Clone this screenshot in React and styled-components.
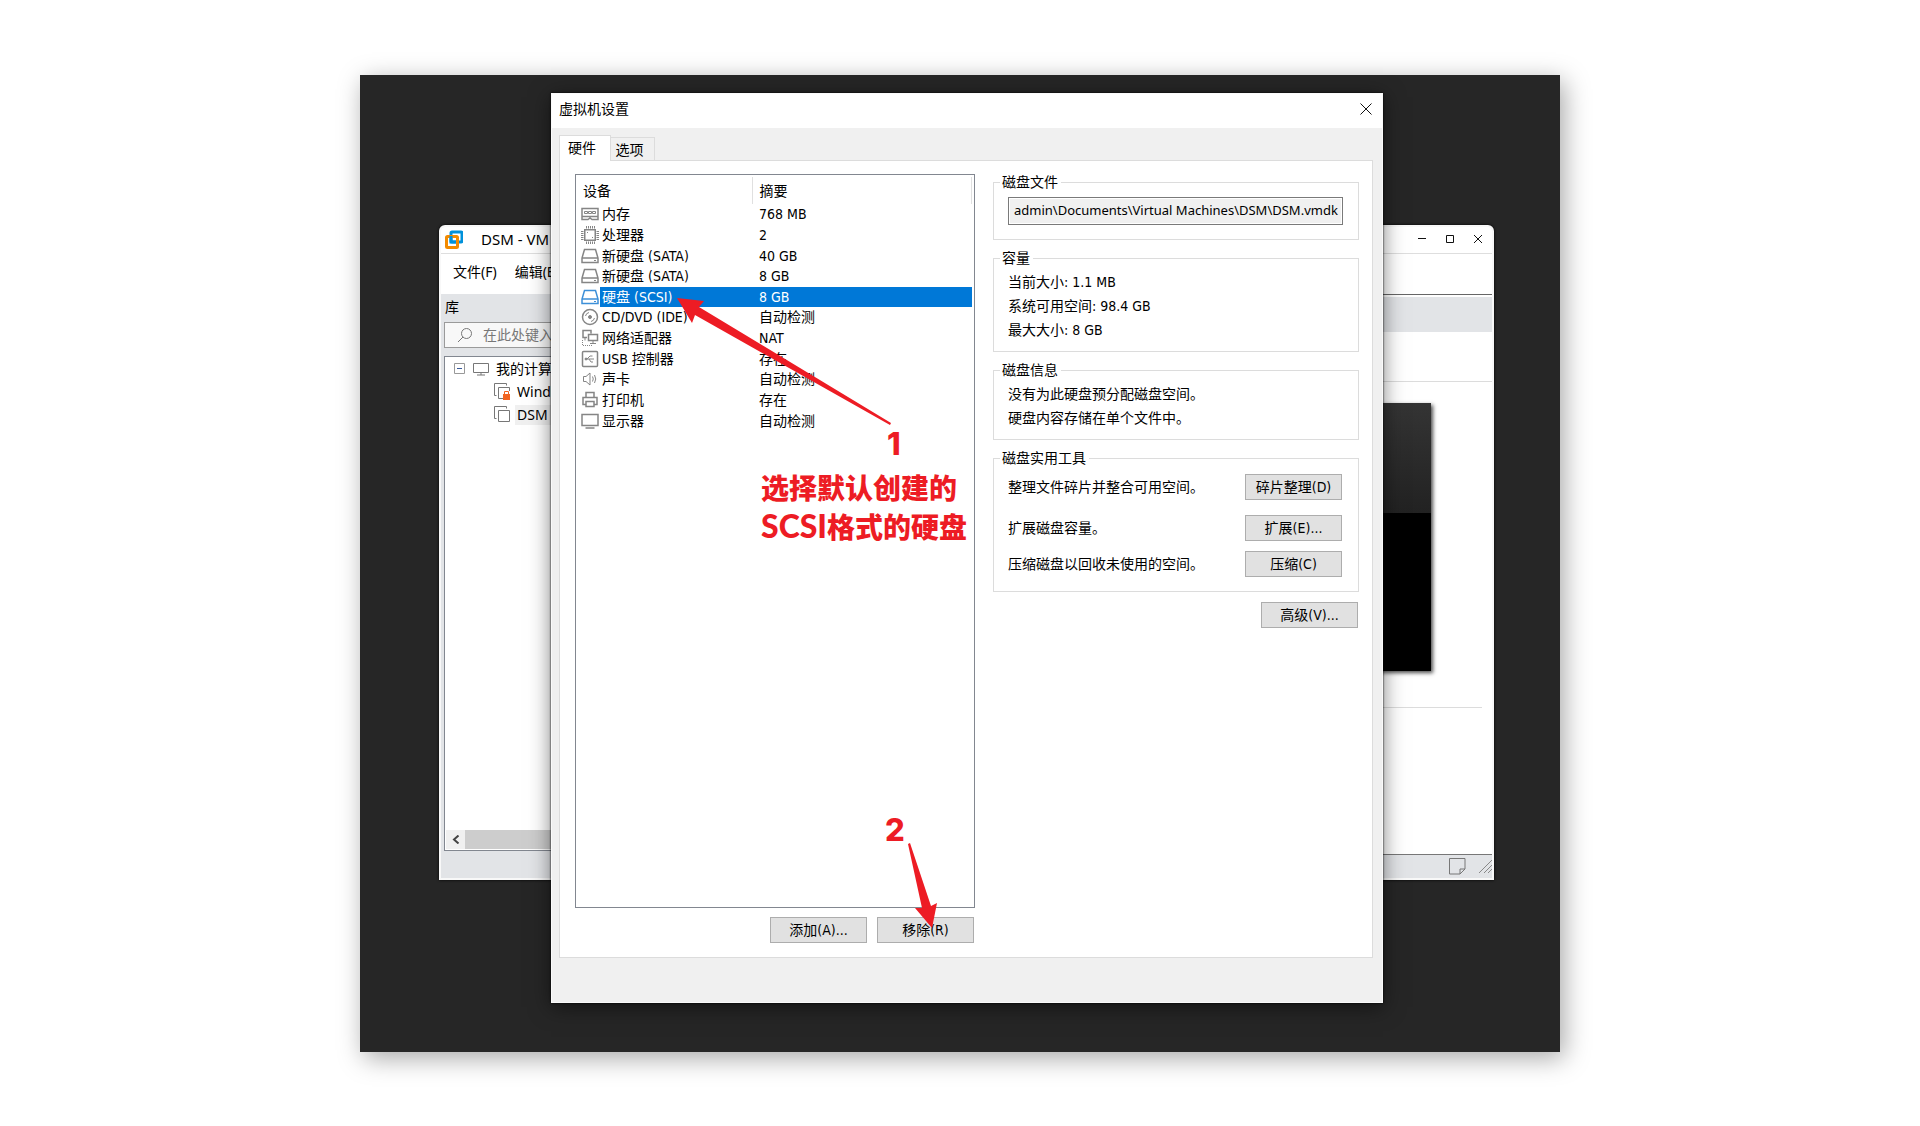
import React from 'react';
import styled, { createGlobalStyle, css } from 'styled-components';

const GlobalStyle = createGlobalStyle`
  * {
    box-sizing: border-box;
  }

  body {
    margin: 0;
    background-color: white;
    color: black;
    font-family: 'DejaVu Sans Condensed', 'Noto Sans CJK SC', sans-serif;
    font-size: 14px;
    line-height: 20px;
    overflow-x: hidden;
  }

  button, input {
    font: inherit;
    color: inherit;
  }
`;

const Page = styled.div`
  display: flex;
  justify-content: center;
  padding: 75px 0;
`;

const Desktop = styled.div`
  position: relative;
  width: 62.5%;
  padding: 18px 177px 49px 191px;
  background-color: #262626;
  box-shadow: 4px 6px 24px rgba(0, 0, 0, 0.35);
`;

/* ---------- Workstation window, behind the dialog ---------- */

const AppWindow = styled.section`
  position: absolute;
  top: 150px;
  right: 66px;
  bottom: 172px;
  left: 79px;
  display: flex;
  flex-direction: column;
  border: 2px solid #f8f8f8;
  border-radius: 6px 6px 0 0;
  background-color: #e2e4e7;
  box-shadow: 0 0 3px black;
  overflow: hidden;
  font-family: 'Noto Sans', 'Noto Sans CJK SC', sans-serif;
`;

const AppTitleBar = styled.header`
  display: flex;
  align-items: center;
  height: 27px;
  padding: 0 6px 2px 4px;
  border-bottom: 1px solid #dedede;
  background-color: white;
`;

const AppTitle = styled.h1`
  flex: 1;
  margin: 0 0 0 18px;
  font-size: 15px;
  font-weight: 400;
`;

const WindowControls = styled.div`
  display: flex;
  gap: 12px;
`;

const IconButton = styled.button`
  display: flex;
  padding: 0;
  border: 0;
  background: none;
`;

const MenuBar = styled.nav`
  display: flex;
  align-items: flex-start;
  gap: 18px;
  height: 40px;
  padding: 8px 12px;
  background-color: white;
`;

const MenuItem = styled.button`
  padding: 0;
  border: 0;
  background: none;
`;

const AppBody = styled.div`
  flex: 1;
  display: flex;
  min-height: 0;
`;

const Library = styled.aside`
  display: flex;
  flex-direction: column;
  width: 240px;
  padding: 3px 3px 27px;
`;

const LibraryTitle = styled.h2`
  margin: 0 0 5px 1px;
  font-size: 14px;
  font-weight: 400;
`;

const SearchBox = styled.label`
  display: flex;
  align-items: center;
  gap: 10px;
  height: 26px;
  margin-bottom: 8px;
  padding: 0 12px;
  border: 1px solid #9a9a9a;
  background-color: #f8f8f8;
`;

const SearchInput = styled.input`
  flex: 1;
  min-width: 0;
  padding: 0;
  border: 0;
  background: none;

  &::placeholder {
    color: #777;
    opacity: 1;
  }
`;

const TreePanel = styled.div`
  flex: 1;
  display: flex;
  flex-direction: column;
  justify-content: space-between;
  border: 1px solid #828790;
  background-color: white;
`;

const Tree = styled.ul`
  margin: 0;
  padding: 0;
  list-style: none;
`;

const TreeItem = styled.li`
  display: flex;
  align-items: center;
  height: 23px;
  padding-left: ${({ $nested }) => ($nested ? '49px' : '9px')};
`;

const TreeLabel = styled.span`
  flex: 1;
  padding-left: ${({ $gap }) => $gap};
  ${({ $selected }) => $selected && css`
    margin-left: 4px;
    background-color: #f0f0f0;
  `}
`;

const TreeIcon = styled.span`
  display: flex;
  margin-left: ${({ $gap }) => $gap || '0'};
`;

const ScrollBar = styled.div`
  display: flex;
  height: 19px;
  margin: 0 1px 1px;
  background-color: #f0f0f0;
`;

const ScrollArrow = styled(IconButton)`
  width: 19px;
  align-items: center;
  justify-content: center;
`;

const ScrollThumb = styled.div`
  flex: 1;
  background-color: #cdcdcd;
`;

const Workspace = styled.main`
  flex: 1;
  display: flex;
  flex-direction: column;
  border-top: 1px solid #666;
`;

const TabStrip = styled.div`
  height: 37px;
  border-top: 2px solid white;
`;

const WorkspaceHead = styled.div`
  height: 50px;
  border-bottom: 1px solid #dcdcdc;
  background-color: white;
`;

const WorkspaceContent = styled.div`
  flex: 1;
  padding: 21px 10px 0;
  border-bottom: 1px solid #777;
  background-color: white;
`;

const GuestScreen = styled.div`
  height: 268px;
  margin: 0 51px 36px 0;
  background: linear-gradient(#343434, #222 41%, black 41%);
  box-shadow: 2px 2px 4px rgba(0, 0, 0, 0.7);
`;

const Divider = styled.hr`
  margin: 0;
  border: 0;
  border-top: 1px solid #dcdcdc;
`;

const StatusBar = styled.footer`
  display: flex;
  align-items: center;
  justify-content: flex-end;
  gap: 13px;
  height: 23px;
`;

/* ---------- Settings dialog ---------- */

const Dialog = styled.section`
  position: relative;
  display: flex;
  flex-direction: column;
  padding-bottom: 44px;
  border: 1px solid #fafafa;
  background-color: #f0f0f0;
  box-shadow: 0 0 2px black, 0 4px 20px rgba(0, 0, 0, 0.5);
`;

const DialogTitleBar = styled.header`
  display: flex;
  align-items: center;
  justify-content: space-between;
  height: 34px;
  padding: 0 10px 4px 7px;
  background-color: white;
`;

const DialogTitle = styled.h2`
  margin: 0;
  font-size: 14px;
  font-weight: 400;
`;

const TabList = styled.div`
  display: flex;
  align-items: flex-end;
  padding: 7px 7px 0;
`;

const Tab = styled.button`
  width: 44px;
  height: 23px;
  padding: 2px 6px 0 0;
  border: 1px solid #dcdcdc;
  border-left: 0;
  border-bottom: 0;
  background-color: #f0f0f0;
  ${({ $active }) => $active && css`
    z-index: 1;
    width: 52px;
    height: 26px;
    margin-bottom: -1px;
    padding: 0 6px 2px 0;
    border-left: 1px solid #dcdcdc;
    background-color: white;
  `}
`;

const TabPanel = styled.div`
  display: grid;
  grid-template-columns: 400fr 366fr;
  gap: 18px;
  margin: 0 9px 0 7px;
  padding: 13px 13px 14px 15px;
  border: 1px solid #dcdcdc;
  background-color: white;
`;

const DeviceColumn = styled.div`
  display: flex;
  flex-direction: column;
  gap: 9px;
`;

const DeviceList = styled.div`
  position: relative;
  height: 734px;
  padding: 2px 2px 0 5px;
  border: 1px solid #828790;
`;

const DeviceTable = styled.table`
  width: 100%;
  height: 254px;
  border-collapse: collapse;
  table-layout: fixed;
`;

const HeadCell = styled.th`
  width: ${({ $width }) => $width};
  height: 27px;
  padding: 0 0 0 ${({ $first }) => ($first ? '2px' : '7px')};
  border-right: 1px solid #e0e0e0;
  font-weight: 400;
  text-align: left;
`;

const Cell = styled.td`
  padding: 0 0 0 7px;
  white-space: nowrap;
  line-height: 18px;
  ${({ $selected }) => $selected && css`
    background-color: #0078d7;
    color: white;
  `}
`;

const DeviceCell = styled(Cell)`
  padding: 0;
  ${({ $selected }) => $selected && css`
    background: linear-gradient(to right, white 19px, #0078d7 19px);
  `}
`;

const DeviceName = styled.span`
  display: flex;
  align-items: center;
  gap: 3px;
`;

const ButtonRow = styled.div`
  display: flex;
  justify-content: flex-end;
  gap: 10px;
  padding-right: 1px;
`;

const PushButton = styled.button`
  flex: none;
  width: 97px;
  height: 26px;
  padding: 0;
  border: 1px solid #adadad;
  background-color: #e1e1e1;
  white-space: nowrap;
`;

const DetailColumn = styled.div`
  display: flex;
  flex-direction: column;
  gap: 10px;
`;

const Group = styled.fieldset`
  min-width: 0;
  margin: 0;
  padding: 0 15px ${({ $bottom }) => $bottom || '9px'} 14px;
  border: 1px solid #dcdcdc;
`;

const GroupTitle = styled.legend`
  margin-left: -8px;
  padding: 0 3px 0 2px;
  line-height: 16px;
`;

const PathInput = styled.input`
  width: 100%;
  height: 28px;
  margin-top: 7px;
  padding: 0 3px 2px 5px;
  border: 1px solid #7a7a7a;
  background-color: #f0f0f0;
  box-shadow: inset 0 0 0 1px white;
  font-family: 'Noto Sans', sans-serif;
  font-size: 13px;
`;

const InfoList = styled.div`
  padding-top: 4px;
`;

const InfoLine = styled.p`
  margin: 0;
  padding: 2px 0;
`;

const ToolRow = styled.div`
  display: flex;
  align-items: center;
  justify-content: space-between;
  margin-top: ${({ $top }) => $top};
  padding-right: 1px;
`;

/* ---------- Notes drawn over the dialog ---------- */

const Note = styled.p`
  position: absolute;
  top: ${({ $top }) => $top};
  left: ${({ $left }) => $left};
  margin: 0;
  color: #ed1c24;
  font-family: Lato, 'Noto Sans CJK SC', sans-serif;
  font-size: 28px;
  font-weight: 900;
  line-height: 37px;
  white-space: nowrap;
`;

const NoteLatin = styled.span`
  font-size: 32px;
`;

const NoteNumber = styled(Note)`
  font-family: Inter, sans-serif;
  font-size: 31px;
  font-weight: 800;
`;

const Arrow = styled.svg`
  position: absolute;
  top: ${({ $top }) => $top};
  left: ${({ $left }) => $left};
  fill: #ed1c24;
  pointer-events: none;
`;

/* ---------- Icons ---------- */

const Glyph = ({ children, color = '#858585' }) => (
  <svg width="18" height="18" viewBox="0 0 18 18" fill="none" stroke={color} aria-hidden="true">
    {children}
  </svg>
);

const MemoryIcon = () => (
  <Glyph>
    <path strokeWidth="1.500" d="M1 3.500h16v11h-6l-2-1.500-2 1.500H1zM1 11.500h16" />
    <path d="M3.500 6.500h3v2h-3zM7.500 6.500h3v2h-3zM11.500 6.500h3v2h-3z" />
  </Glyph>
);

const CpuIcon = () => (
  <Glyph>
    <rect x="3.750" y="3.750" width="10.500" height="10.500" strokeWidth="1.500" />
    <path d="M5.500 0v2.500M7.500 0v2.500M9.500 0v2.500M11.500 0v2.500M13.500 0v2.500" />
    <path d="M5.500 15.500V18M7.500 15.500V18M9.500 15.500V18M11.500 15.500V18M13.500 15.500V18" />
    <path d="M0 5.500h2.500M0 7.500h2.500M0 9.500h2.500M0 11.500h2.500M0 13.500h2.500" />
    <path d="M15.500 5.500H18M15.500 7.500H18M15.500 9.500H18M15.500 11.500H18M15.500 13.500H18" />
    <path d="M6 6.500h1M11 11.500h1" />
  </Glyph>
);

const DiskIcon = ({ color }) => (
  <Glyph color={color}>
    <path strokeWidth="1.500" d="M3.500 2.500h11l2.500 8.500v4.500H1v-4.500zM1 11h16" />
    <path d="M13 13.500h2" />
  </Glyph>
);

const DiscIcon = () => (
  <Glyph>
    <circle cx="9" cy="9" r="7.500" strokeWidth="1.500" />
    <circle cx="9" cy="9" r="1.500" fill="#858585" />
    <path d="M4.500 8a4.500 4.500 0 0 1 3.500-3.500M13.500 10a4.500 4.500 0 0 1-3.500 3.500" />
  </Glyph>
);

const NetworkIcon = () => (
  <Glyph>
    <path strokeWidth="1.500" d="M6 8.500H2v-7h8v3M7.500 5.500h9v6h-9z" />
    <path d="M4 8.500v3M12 11.500v3M9 14.500h6" />
    <path strokeDasharray="1 1" d="M1.500 11v5.500H11" />
  </Glyph>
);

const UsbIcon = () => (
  <Glyph>
    <rect x="1.500" y="1.500" width="15" height="15" rx="1" strokeWidth="1.500" />
    <path d="M4 9h9M6 9l3-3h2.500M8 9l2 3h2" />
    <circle cx="5" cy="9" r="1" fill="#858585" />
  </Glyph>
);

const SoundIcon = () => (
  <Glyph>
    <path d="M2.500 6.500h2.500l4-3.500v12l-4-3.500H2.500zM11.500 6.500q1.500 2.500 0 5M13.500 5q2.500 4 0 8" />
  </Glyph>
);

const PrinterIcon = () => (
  <Glyph>
    <path strokeWidth="1.500" d="M5 6.500v-5h8v5M4.500 13.500H2v-7h14v7h-2.500M5 10.500h8v5H5z" />
  </Glyph>
);

const DisplayIcon = () => (
  <Glyph>
    <path strokeWidth="1.500" d="M1 2.500h16v11H1zM4.500 16h9" />
  </Glyph>
);

const LogoIcon = () => (
  <svg width="18" height="19" viewBox="0 0 18 19" fill="none" strokeWidth="3" aria-hidden="true">
    <rect x="6" y="2" width="11" height="10" rx="1" stroke="#0091da" />
    <rect x="1.500" y="6.500" width="11" height="11" rx="1" stroke="#f38b00" />
    <path d="M6 6v6h5" stroke="#0091da" />
  </svg>
);

const SearchIcon = () => (
  <svg width="16" height="16" viewBox="0 0 16 16" fill="none" stroke="#777" aria-hidden="true">
    <circle cx="9.500" cy="6.500" r="5" />
    <path d="M6 10l-5 5" />
  </svg>
);

const CollapseIcon = () => (
  <svg width="11" height="11" viewBox="0 0 11 11" fill="none" aria-hidden="true">
    <path d="M.5.5h10v10H.5z" stroke="#999" />
    <path d="M3 5.500h5" stroke="#3a5a9a" />
  </svg>
);

const ComputerIcon = () => (
  <svg width="16" height="14" viewBox="0 0 16 14" fill="none" stroke="#777" aria-hidden="true">
    <path d="M.5 1.500h15v9H.5zM8 11v2M4 13h8" />
  </svg>
);

const VmIcon = ({ locked }) => (
  <svg width="17" height="17" viewBox="0 0 17 17" fill="none" stroke="#777" aria-hidden="true">
    <path d="M2.500 12.500h-2V.5h12v2" />
    <path d="M4.500 4.500h11v11h-11z" />
    {locked && (
      <>
        <path d="M9 8h8v9H9z" fill="white" stroke="none" />
        <path d="M9 11h7v6H9z" fill="#f26522" stroke="none" />
        <path d="M10.500 11V8.500h4V11" stroke="#f26522" />
      </>
    )}
  </svg>
);

const CloseIcon = ({ size = 12 }) => (
  <svg width={size} height={size} viewBox="0 0 12 12" stroke="#111" aria-hidden="true">
    <path d="M.5.5l11 11M11.500.5l-11 11" />
  </svg>
);

const devices = [
  { name: '内存', summary: '768 MB', Icon: MemoryIcon },
  { name: '处理器', summary: '2', Icon: CpuIcon },
  { name: '新硬盘 (SATA)', summary: '40 GB', Icon: DiskIcon },
  { name: '新硬盘 (SATA)', summary: '8 GB', Icon: DiskIcon },
  { name: '硬盘 (SCSI)', summary: '8 GB', Icon: DiskIcon, selected: true },
  { name: 'CD/DVD (IDE)', summary: '自动检测', Icon: DiscIcon },
  { name: '网络适配器', summary: 'NAT', Icon: NetworkIcon },
  { name: 'USB 控制器', summary: '存在', Icon: UsbIcon },
  { name: '声卡', summary: '自动检测', Icon: SoundIcon },
  { name: '打印机', summary: '存在', Icon: PrinterIcon },
  { name: '显示器', summary: '自动检测', Icon: DisplayIcon },
];

const WorkstationWindow = () => (
  <AppWindow>
    <AppTitleBar>
      <LogoIcon />
      <AppTitle>DSM - VM</AppTitle>
      <WindowControls>
        <IconButton aria-label="最小化">
          <svg width="16" height="12" viewBox="0 0 16 12" stroke="#111">
            <path d="M4 5.500h8" />
          </svg>
        </IconButton>
        <IconButton aria-label="最大化">
          <svg width="16" height="12" viewBox="0 0 16 12" fill="none" stroke="#111">
            <path d="M4.500 2.500h7v7h-7z" />
          </svg>
        </IconButton>
        <IconButton aria-label="关闭">
          <svg width="16" height="12" viewBox="0 0 16 12" stroke="#111">
            <path d="M4 2l8 8M12 2l-8 8" />
          </svg>
        </IconButton>
      </WindowControls>
    </AppTitleBar>
    <MenuBar>
      <MenuItem>文件(F)</MenuItem>
      <MenuItem>编辑(E)</MenuItem>
    </MenuBar>
    <AppBody>
      <Library>
        <LibraryTitle>库</LibraryTitle>
        <SearchBox>
          <SearchIcon />
          <SearchInput type="text" aria-label="库" placeholder="在此处键入" />
        </SearchBox>
        <TreePanel>
          <Tree>
            <TreeItem>
              <CollapseIcon />
              <TreeIcon $gap="8px">
                <ComputerIcon />
              </TreeIcon>
              <TreeLabel $gap="7px">我的计算机</TreeLabel>
            </TreeItem>
            <TreeItem $nested>
              <TreeIcon>
                <VmIcon locked />
              </TreeIcon>
              <TreeLabel $gap="6px">Windows</TreeLabel>
            </TreeItem>
            <TreeItem $nested>
              <TreeIcon>
                <VmIcon />
              </TreeIcon>
              <TreeLabel $gap="2px" $selected>DSM</TreeLabel>
            </TreeItem>
          </Tree>
          <ScrollBar>
            <ScrollArrow aria-label="向左滚动">
              <svg width="8" height="9" viewBox="0 0 8 9" fill="none" stroke="#444" strokeWidth="2">
                <path d="M6.500.5l-4.500 4 4.500 4" />
              </svg>
            </ScrollArrow>
            <ScrollThumb />
          </ScrollBar>
        </TreePanel>
      </Library>
      <Workspace>
        <TabStrip />
        <WorkspaceHead />
        <WorkspaceContent>
          <GuestScreen />
          <Divider />
        </WorkspaceContent>
        <StatusBar>
          <svg width="17" height="17" viewBox="0 0 17 17" fill="none" stroke="#777">
            <path d="M.5.5h15.500v10.500l-5 5H.5zM11 16v-5h5" />
          </svg>
          <svg width="13" height="13" viewBox="0 0 13 13" stroke="#888">
            <path d="M0 13L13 0M5 13l8-8M9 13l4-4" />
          </svg>
        </StatusBar>
      </Workspace>
    </AppBody>
  </AppWindow>
);

const DevicePane = () => (
  <DeviceColumn>
    <DeviceList>
      <DeviceTable>
        <thead>
          <tr>
            <HeadCell $first $width="171px">设备</HeadCell>
            <HeadCell>摘要</HeadCell>
          </tr>
        </thead>
        <tbody>
          {devices.map(({ name, summary, Icon, selected }, i) => (
            <tr key={i}>
              <DeviceCell $selected={selected}>
                <DeviceName>
                  <Icon color={selected ? '#3c8fd8' : undefined} />
                  {name}
                </DeviceName>
              </DeviceCell>
              <Cell $selected={selected}>{summary}</Cell>
            </tr>
          ))}
        </tbody>
      </DeviceTable>
      <Arrow $top="122px" $left="100px" width="220" height="135" viewBox="0 0 220 135">
        <path d="M1 1L28 4 23 10 215 126 214 128 19 18 16 26z" />
      </Arrow>
      <NoteNumber $top="250px" $left="311px">1</NoteNumber>
      <Note $top="295px" $left="185px">
        选择默认创建的
        <br />
        <NoteLatin>SCSI</NoteLatin>格式的硬盘
      </Note>
      <NoteNumber $top="636px" $left="309px">2</NoteNumber>
      <Arrow $top="667px" $left="332px" width="30" height="88" viewBox="0 0 30 88">
        <path d="M0 2L2 1 23 64 29 61 24 86 7 66 14 66z" />
      </Arrow>
    </DeviceList>
    <ButtonRow>
      <PushButton>添加(A)...</PushButton>
      <PushButton>移除(R)</PushButton>
    </ButtonRow>
  </DeviceColumn>
);

const DiskPane = () => (
  <DetailColumn>
    <Group $bottom="14px">
      <GroupTitle>磁盘文件</GroupTitle>
      <PathInput
        type="text"
        aria-label="磁盘文件"
        readOnly
        defaultValue="admin\Documents\Virtual Machines\DSM\DSM.vmdk"
      />
    </Group>
    <Group>
      <GroupTitle>容量</GroupTitle>
      <InfoList>
        <InfoLine>当前大小: 1.1 MB</InfoLine>
        <InfoLine>系统可用空间: 98.4 GB</InfoLine>
        <InfoLine>最大大小: 8 GB</InfoLine>
      </InfoList>
    </Group>
    <Group>
      <GroupTitle>磁盘信息</GroupTitle>
      <InfoList>
        <InfoLine>没有为此硬盘预分配磁盘空间。</InfoLine>
        <InfoLine>硬盘内容存储在单个文件中。</InfoLine>
      </InfoList>
    </Group>
    <Group $bottom="14px">
      <GroupTitle>磁盘实用工具</GroupTitle>
      <ToolRow $top="8px">
        整理文件碎片并整合可用空间。
        <PushButton>碎片整理(D)</PushButton>
      </ToolRow>
      <ToolRow $top="15px">
        扩展磁盘容量。
        <PushButton>扩展(E)...</PushButton>
      </ToolRow>
      <ToolRow $top="10px">
        压缩磁盘以回收未使用的空间。
        <PushButton>压缩(C)</PushButton>
      </ToolRow>
    </Group>
    <ButtonRow>
      <PushButton>高级(V)...</PushButton>
    </ButtonRow>
  </DetailColumn>
);

const App = () => {
  return (
    <Page>
      <GlobalStyle />
      <Desktop>
        <WorkstationWindow />
        <Dialog role="dialog" aria-labelledby="settings-title">
          <DialogTitleBar>
            <DialogTitle id="settings-title">虚拟机设置</DialogTitle>
            <IconButton aria-label="关闭">
              <CloseIcon />
            </IconButton>
          </DialogTitleBar>
          <TabList role="tablist">
            <Tab role="tab" aria-selected="true" $active>硬件</Tab>
            <Tab role="tab" aria-selected="false">选项</Tab>
          </TabList>
          <TabPanel role="tabpanel">
            <DevicePane />
            <DiskPane />
          </TabPanel>
        </Dialog>
      </Desktop>
    </Page>
  );
};

export default App;
